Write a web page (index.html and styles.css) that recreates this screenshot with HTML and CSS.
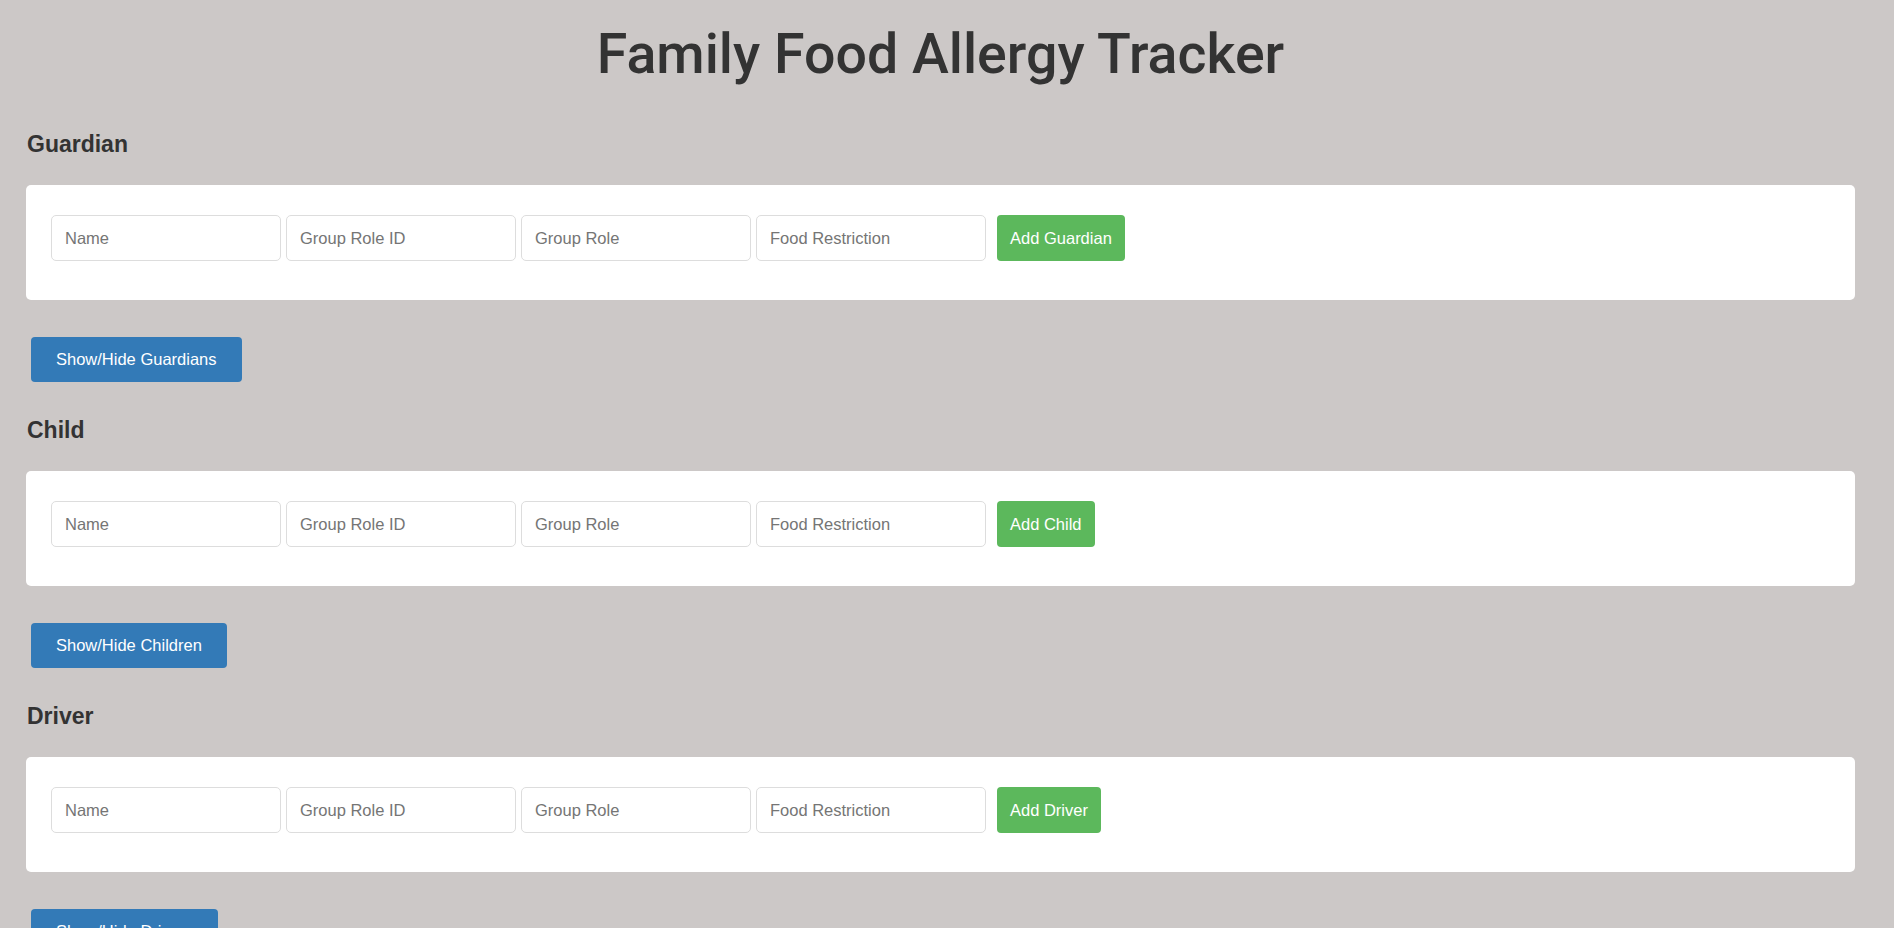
FILE: index.html
```html
<!DOCTYPE html>
<html lang="en">
<head>
<meta charset="utf-8">
<title>Family Food Allergy Tracker</title>
<link rel="stylesheet" href="styles.css">
</head>
<body>
<div class="page">
  <h1 class="title">Family Food Allergy Tracker</h1>

  <section class="group">
    <h3 class="group-title">Guardian</h3>
    <div class="card">
      <form class="entry-form">
        <input class="field" type="text" placeholder="Name">
        <input class="field" type="text" placeholder="Group Role ID">
        <input class="field" type="text" placeholder="Group Role">
        <input class="field" type="text" placeholder="Food Restriction">
        <button type="button" class="btn btn-add">Add Guardian</button>
      </form>
    </div>
    <button type="button" class="btn btn-toggle">Show/Hide Guardians</button>
  </section>

  <section class="group">
    <h3 class="group-title">Child</h3>
    <div class="card">
      <form class="entry-form">
        <input class="field" type="text" placeholder="Name">
        <input class="field" type="text" placeholder="Group Role ID">
        <input class="field" type="text" placeholder="Group Role">
        <input class="field" type="text" placeholder="Food Restriction">
        <button type="button" class="btn btn-add">Add Child</button>
      </form>
    </div>
    <button type="button" class="btn btn-toggle">Show/Hide Children</button>
  </section>

  <section class="group">
    <h3 class="group-title">Driver</h3>
    <div class="card">
      <form class="entry-form">
        <input class="field" type="text" placeholder="Name">
        <input class="field" type="text" placeholder="Group Role ID">
        <input class="field" type="text" placeholder="Group Role">
        <input class="field" type="text" placeholder="Food Restriction">
        <button type="button" class="btn btn-add">Add Driver</button>
      </form>
    </div>
    <button type="button" class="btn btn-toggle">Show/Hide Drivers</button>
  </section>
</div>
</body>
</html>
```

FILE: styles.css
```css
* { box-sizing: border-box; }

html, body {
  margin: 0;
  padding: 0;
  background: #ccc8c7;
}

body {
  font-family: "Liberation Sans", Arial, sans-serif;
  color: #333;
}

.page {
  padding: 20px 39px 40px 26px;
}

.title {
  margin: 0;
  font-family: Roboto, "Liberation Sans", sans-serif;
  font-weight: 500;
  font-size: 55.5px;
  line-height: 70px;
  text-align: center;
  color: #333;
}

.group-title {
  margin: 0 0 27px 1px;
  font-size: 23px;
  line-height: 28px;
  font-weight: bold;
  color: #333;
}

.group:first-of-type .group-title {
  margin-top: 40px;
}

.group + .group .group-title {
  margin-top: 34px;
}

.card {
  background: #fff;
  border-radius: 5px;
  padding: 30px 25px 39px;
}

.entry-form {
  display: flex;
  align-items: center;
  gap: 5px;
}

.field {
  width: 230px;
  height: 46px;
  margin: 0;
  padding: 0 13px;
  border: 1px solid #ddd;
  border-radius: 5px;
  background: #fff;
  font-family: "Liberation Sans", Arial, sans-serif;
  font-size: 16.5px;
  color: #555;
}

.field::placeholder {
  color: #757575;
}

.btn {
  border: none;
  margin: 0;
  font-family: "Liberation Sans", Arial, sans-serif;
  font-size: 16.5px;
  color: #fff;
  border-radius: 4px;
  cursor: pointer;
}

.btn-add {
  height: 46px;
  margin-left: 6px;
  padding: 0 13px;
  background: #5cb85c;
}

.btn-toggle {
  display: block;
  height: 45px;
  margin: 37px 0 0 5px;
  padding: 0 25px;
  background: #337ab7;
}
```
